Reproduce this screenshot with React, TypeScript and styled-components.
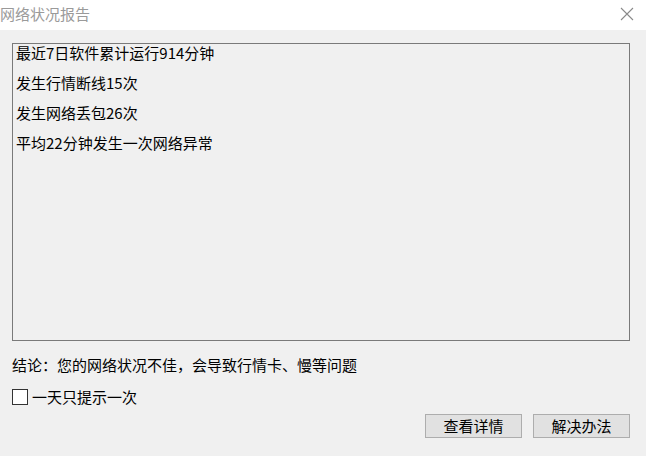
import React, {useState} from 'react';
import styled, {createGlobalStyle} from 'styled-components';

const lines = ['最近7日软件累计运行914分钟', '发生行情断线15次', '发生网络丢包26次', '平均22分钟发生一次网络异常'];

export default function App() {
  const [once, setOnce] = useState(false);
  return (
    <Dialog>
      <GlobalStyle />
      <TitleBar>
        <Title>网络状况报告</Title>
        <Close aria-label="关闭">
          <svg width="14" height="14" viewBox="0 0 14 14">
            <path d="M1 1 L13 13 M13 1 L1 13" stroke="#8a8a8a" strokeWidth="1.1" />
          </svg>
        </Close>
      </TitleBar>
      <Body>
        <Report>
          {lines.map(l => (
            <Line key={l}>{l}</Line>
          ))}
        </Report>
        <Conclusion>结论：您的网络状况不佳，会导致行情卡、慢等问题</Conclusion>
        <CheckRow onClick={() => setOnce(p => !p)}>
          <Box checked={once}>{once && '✓'}</Box>
          一天只提示一次
        </CheckRow>
        <Actions>
          <Button>查看详情</Button>
          <Button>解决办法</Button>
        </Actions>
      </Body>
    </Dialog>
  );
}

const GlobalStyle = createGlobalStyle`
  html, body {
    margin: 0;
    padding: 0;
    background: #f0f0f0;
  }
  body {
    font-family: "Noto Sans CJK SC", "DejaVu Sans", sans-serif;
    color: #000;
  }
`;

const Dialog = styled.div`
  width: 646px;
  height: 456px;
  display: flex;
  flex-direction: column;
  background: #f0f0f0;
  overflow: hidden;
`;

const TitleBar = styled.div`
  height: 30px;
  background: #fff;
  display: flex;
  align-items: center;
  justify-content: space-between;
`;

const Title = styled.span`
  font-size: 15px;
  color: #9a9a9a;
  margin-top: -3px;
`;

const Close = styled.button`
  border: none;
  background: none;
  padding: 0;
  margin: -2px 12px 0 0;
  width: 14px;
  height: 14px;
  display: flex;
`;

const Body = styled.div`
  display: flex;
  flex-direction: column;
  padding: 13px 16px 0 12px;
`;

const Report = styled.div`
  height: 296px;
  border: 1px solid #7a7a7a;
  padding: 0 3px;
  display: flex;
  flex-direction: column;
  gap: 12px;
`;

const Line = styled.div`
  font-size: 15px;
  line-height: 18px;
`;

const Conclusion = styled.div`
  margin-top: 14px;
  font-size: 15px;
  line-height: 20px;
`;

const CheckRow = styled.label`
  margin-top: 14px;
  display: flex;
  align-items: center;
  gap: 4px;
  font-size: 15px;
  line-height: 16px;
  cursor: pointer;
`;

const Box = styled.span<{checked: boolean}>`
  width: 14px;
  height: 14px;
  border: 1px solid #333;
  background: #fff;
  display: flex;
  align-items: center;
  justify-content: center;
  font-size: 12px;
  color: ${p => (p.checked ? '#000' : 'transparent')};
`;

const Actions = styled.div`
  margin-top: 9px;
  display: flex;
  justify-content: flex-end;
  gap: 11px;
`;

const Button = styled.button`
  width: 97px;
  height: 24px;
  background: #e1e1e1;
  border: 1px solid #adadad;
  font-family: inherit;
  font-size: 15px;
  line-height: 20px;
  padding: 0;
  color: #000;
`;
